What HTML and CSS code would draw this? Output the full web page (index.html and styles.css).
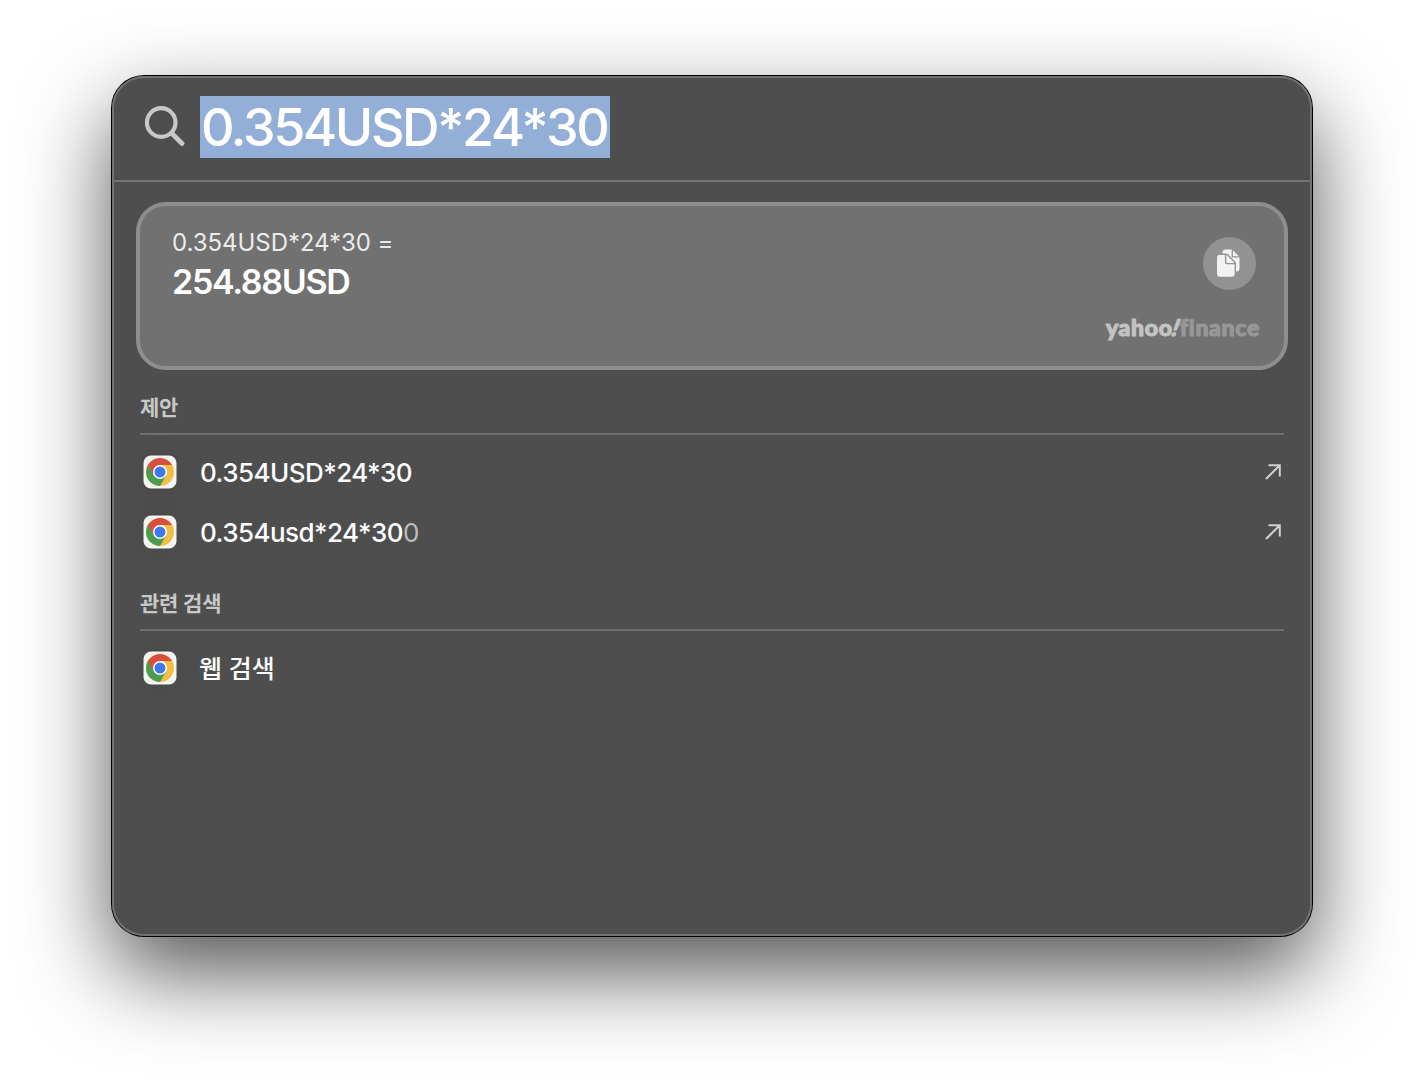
FILE: index.html
```
<!DOCTYPE html>
<html lang="ko">
<head>
    <meta charset="UTF-8">
    <meta name="viewport" content="width=device-width, initial-scale=1.0">
    <title>Spotlight</title>
    <link rel="stylesheet" href="styles.css">
</head>
<body>
    <!-- Chrome icon, shared by the result rows -->
    <svg class="defs" width="0" height="0">
        <symbol id="chrome" viewBox="0 0 34 34">
            <rect x="0.5" y="0.5" width="33" height="33" rx="7.5" fill="#f4f4f3"/>
            <circle cx="17" cy="17" r="14" fill="#f3be43"/>
            <path d="M17 17 L4.9 10 A14 14 0 0 0 17 31 L23.1 20.5 Z" fill="#4b9c50"/>
            <path d="M17 17 L10.9 20.5 L4.9 10 A14 14 0 0 1 29.1 10 L17 10 Z" fill="#d84f3f"/>
            <circle cx="17" cy="17" r="7" fill="#fff"/>
            <circle cx="17" cy="17" r="5.5" fill="#3f78e8"/>
        </symbol>
        <symbol id="arrow" viewBox="0 0 18 18">
            <path d="M2 16 L15.5 2.5 M4.5 2.2 H15.8 V13.5" fill="none" stroke="#d0d0d0" stroke-width="2"/>
        </symbol>
    </svg>

    <main class="window">
        <header class="search">
            <svg class="search-icon" viewBox="0 0 40 42" width="40" height="42">
                <circle cx="16.2" cy="16.5" r="14.3" fill="none" stroke="#c8c8c8" stroke-width="4.2"/>
                <path d="M26.5 27 L37 37.5" stroke="#c8c8c8" stroke-width="4.8" stroke-linecap="round"/>
            </svg>
            <span class="query">0.354USD*24*30</span>
        </header>

        <div class="results">
            <section class="card">
                <div class="calc">
                    <p class="expression">0.354USD*24*30 =</p>
                    <p class="answer">254.88USD</p>
                </div>
                <div class="side">
                    <button class="copy" aria-label="복사">
                        <svg viewBox="0 0 24 28" width="24" height="28">
                            <path d="M8.5 0.5 H15 L22.5 8 V19.5 Q22.5 22.5 19.5 22.5 H8.5 Q5.5 22.5 5.5 19.5 V3.5 Q5.5 0.5 8.5 0.5 Z" fill="#f2f2f2"/>
                            <path d="M15.3 0.5 V7.8 H22.5" fill="none" stroke="#929292" stroke-width="1.3"/>
                            <path d="M3 5.8 H9.5 L17.7 14 V24.7 Q17.7 27.7 14.7 27.7 H3 Q0 27.7 0 24.7 V8.8 Q0 5.8 3 5.8 Z" fill="#f2f2f2"/>
                            <path d="M3 5.2 H10 L18.3 13.7 V23 M8.6 6 V12.7 Q8.6 14.6 10.5 14.6 H18" fill="none" stroke="#929292" stroke-width="1.4"/>
                        </svg>
                    </button>
                    <div class="brand"><b>yahoo<i>!</i></b><span>finance</span></div>
                </div>
            </section>

            <h2>제안</h2>
            <ul>
                <li>
                    <svg class="app"><use href="#chrome"/></svg>
                    <span class="label">0.354USD*24*30</span>
                    <svg class="arrow"><use href="#arrow"/></svg>
                </li>
                <li>
                    <svg class="app"><use href="#chrome"/></svg>
                    <span class="label">0.354usd*24*30<em>0</em></span>
                    <svg class="arrow"><use href="#arrow"/></svg>
                </li>
            </ul>

            <h2 class="related">관련 검색</h2>
            <ul>
                <li>
                    <svg class="app"><use href="#chrome"/></svg>
                    <span class="label korean">웹 검색</span>
                </li>
            </ul>
        </div>
    </main>
</body>
</html>
```
FILE: styles.css
```
* {
    box-sizing: border-box;
}

body {
    margin: 0;
    height: 1084px;
    padding: 76px 112px;
    overflow: hidden;
    background: #fff;
    color: #fff;
    font-family: Inter, "Noto Sans CJK KR", sans-serif;
    font-feature-settings: "calt" 0;
}

.defs {
    position: absolute;
}

.window {
    height: 860px;
    border-radius: 32px;
    background: #4e4e4e;
    box-shadow: inset 0 0 0 2px #727272, 0 0 0 1px #000, 0 36px 88px rgba(0, 0, 0, 0.68);
}

.search {
    display: flex;
    align-items: flex-start;
    height: 106px;
    padding: 20px 32px 0;
    border-bottom: 2px solid #727272;
}

.search-icon {
    margin: 10px 15px 0 1px;
}

.query {
    height: 62px;
    width: 410px;
    padding-left: 1px;
    background: #94afd7;
    font-size: 52px;
    font-weight: 500;
    line-height: 64px;
    letter-spacing: -2.35px;
    white-space: nowrap;
}

.results {
    padding: 20px 24px;
}

.card {
    display: flex;
    justify-content: space-between;
    height: 168px;
    padding: 22px 24px 0 32px;
    border: 4px solid #8e8e8e;
    border-radius: 30px;
    background: #717171;
}

.card p {
    margin: 0;
    white-space: nowrap;
}

.expression {
    font-size: 24px;
    line-height: 30px;
    letter-spacing: -0.05px;
    color: #ebebeb;
}

.answer {
    padding-top: 2px;
    font-size: 34px;
    font-weight: 600;
    line-height: 43px;
    letter-spacing: -1.3px;
}

.side {
    display: flex;
    flex-direction: column;
    align-items: flex-end;
    padding-top: 9px;
}

.copy {
    display: flex;
    align-items: center;
    justify-content: center;
    width: 53px;
    height: 53px;
    margin: 0 4px 0 0;
    padding: 0 2px 1px 0;
    border: 0;
    border-radius: 50%;
    background: #929292;
}

.brand {
    display: flex;
    margin-top: 23px;
    font-family: Lato, sans-serif;
    font-size: 23px;
    font-weight: 900;
    line-height: 28px;
    letter-spacing: 0.7px;
    font-variant-ligatures: none;
    color: #979797;
    -webkit-text-stroke: 1.1px;
}

.brand b {
    font-weight: 900;
    color: #c3c3c3;
}

.brand i {
    display: inline-block;
    transform: skewX(-14deg);
}

h2 {
    height: 64px;
    margin: 0 4px;
    padding-top: 22px;
    border-bottom: 2px solid #6e6e6e;
    font-size: 21px;
    font-weight: 700;
    line-height: 30px;
    letter-spacing: -0.2px;
    color: #c8c8c8;
}

.card + h2 {
    margin-top: 1px;
}

h2.related {
    margin-top: 5px;
}

ul {
    margin: 7px 0 0;
    padding: 0 6px 0 7px;
    list-style: none;
}

li {
    display: flex;
    align-items: center;
    height: 60px;
}

.app {
    width: 34px;
    height: 34px;
    margin-right: 23px;
    filter: drop-shadow(0 1px 12px rgba(0, 0, 0, 0.08));
}

.label {
    flex: 1;
    padding-top: 2px;
    font-size: 26px;
    font-weight: 500;
    line-height: 34px;
    letter-spacing: -0.55px;
}

.label em {
    font-style: normal;
    font-weight: 400;
    color: #bdbdbd;
}

.korean {
    margin-left: -1px;
    font-size: 25px;
    letter-spacing: 0;
}

.arrow {
    width: 18px;
    height: 18px;
}
```
